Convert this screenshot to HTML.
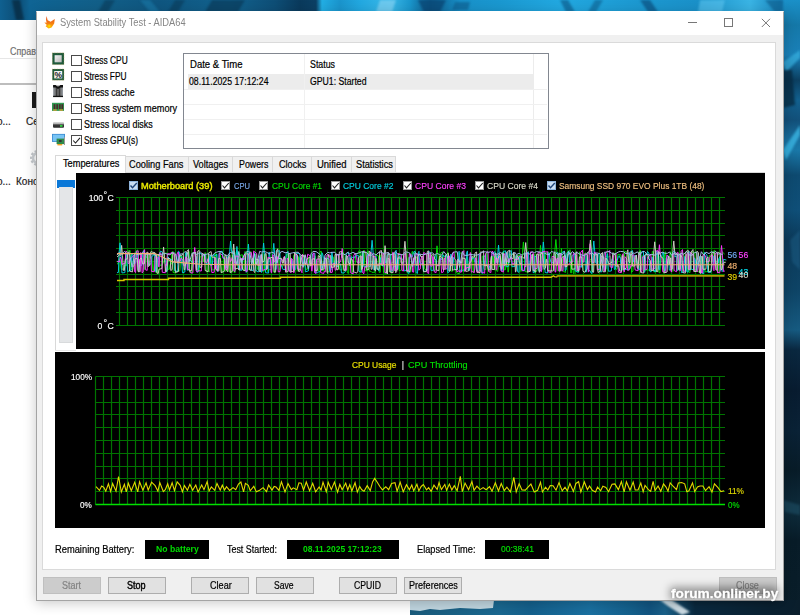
<!DOCTYPE html>
<html><head><meta charset="utf-8">
<style>
*{margin:0;padding:0;box-sizing:border-box}
html,body{width:800px;height:615px;overflow:hidden;background:#0b2c44}
body{position:relative;font-family:"Liberation Sans",sans-serif;font-size:10px;color:#000}
.a{position:absolute}
.t{position:absolute;white-space:nowrap;line-height:10px;font-size:10px;color:#000;-webkit-text-stroke:0.2px currentColor}
.g{position:absolute;white-space:nowrap;line-height:8.7px;font-size:8.7px;-webkit-text-stroke:0.15px currentColor}
.cb{position:absolute;width:10.5px;height:10.5px;border:1px solid #4a4a4a;background:#fff}
.btn{position:absolute;height:16.5px;top:577px;width:58px;background:#e1e1e1;border:1px solid #adadad}
.tab{position:absolute;top:156px;height:16px;background:#f0f0f0;border:1px solid #d9d9d9;border-bottom:none}
.blk{position:absolute;background:#000}
.lc{position:absolute;width:9px;height:9px;background:#fff;border:0.5px solid #999}
</style></head><body>
<!-- desktop background -->
<div class="a" style="left:0;top:0;width:800px;height:615px;background:linear-gradient(90deg,#0f6090 0px,#0c4c74 18px,#0f6494 30px,#125f88 100px,#0f5680 160px,#12628e 230px,#0e4e76 275px,#0a3a5c 300px,#0c4064 316px,#22aee4 322px,#1a94cc 340px,#22a8e0 360px,#3ab8e8 390px,#1a96cc 410px,#0e5a8a 430px,#1890c8 460px,#1a98d0 500px,#22a8e0 560px,#1c98d0 640px,#1a90c8 700px,#3ab4e4 750px,#1a88c0 780px,#1a80b8 800px)"></div>
<div class="a" style="left:783px;top:0;width:17px;height:615px;background:linear-gradient(180deg,#1a90c8 0px,#1578a8 25px,#1a80b8 55px,#0c3f60 80px,#12608e 100px,#12507a 120px,#1a70a0 140px,#1a78a8 150px,#0e4a70 175px,#0f4f78 210px,#0c3a5a 240px,#0e4466 290px,#165a80 330px,#0a2840 350px,#081c30 390px,#0a2236 430px,#081c28 470px,#0e2c3c 510px,#081c28 540px,#0a1e2a 615px)"></div>
<div class="a" style="left:410px;top:600px;width:390px;height:15px;background:linear-gradient(90deg,#1a5a7a 0px,#1a6890 90px,#14608c 120px,#1a70a0 180px,#14608c 220px,#115480 240px,#1a6088 255px,#0a2a40 285px,#0a1e2c 390px)"></div>
<svg class="a" style="left:410px;top:600px" width="90" height="12" viewBox="0 0 90 12"><path d="M0 0H84L83 8L70 9L50 8L30 10L20 9L10 11L0 10Z" fill="#c0d6e0"/></svg>
<svg class="a" style="left:0;top:0" width="800" height="615" viewBox="0 0 800 615">
<g style="filter:blur(1.2px)">
<path d="M12 0L20 0L24 20L16 20Z" fill="#072c44" opacity=".8"/>
<path d="M105 0L115 0L108 12L98 12Z" fill="#0a3a58" opacity=".6"/>
<path d="M140 0L150 0L160 12L150 12Z" fill="#1a7aa8" opacity=".6"/>
<path d="M175 0L185 0L178 12L168 12Z" fill="#0a3a58" opacity=".6"/>
<path d="M212 0L245 0L238 12L205 12Z" fill="#0a3a5a" opacity=".7"/>
<path d="M380 0L396 0L392 12L376 12Z" fill="#78cdf0" opacity=".8"/>
<path d="M418 0L446 0L440 12L424 12Z" fill="#0a4a78" opacity=".8"/>
<path d="M455 2L470 2L468 10L452 10Z" fill="#0e5a8a" opacity=".6"/>
<path d="M560 0L568 0L575 12L566 12Z" fill="#0e5f90" opacity=".7"/>
<path d="M595 0L603 0L596 12L588 12Z" fill="#0e5f90" opacity=".6"/>
<path d="M640 0L650 0L658 12L648 12Z" fill="#0c5080" opacity=".7"/>
<path d="M700 0L725 0L722 12L698 12Z" fill="#5cc4ee" opacity=".6"/>
<path d="M765 0L783 0L783 12L775 12Z" fill="#0e5a88" opacity=".6"/>
<path d="M783 62L800 50L800 58L786 72Z" fill="#38b0e0" opacity=".7"/>
<path d="M783 70L792 70L795 105L783 108Z" fill="#082c44" opacity=".8"/>
<path d="M783 150L800 125L800 135L786 160Z" fill="#40c0ee" opacity=".7"/>
<path d="M790 240L800 230L800 270L792 262Z" fill="#1a5a80" opacity=".6"/>
<path d="M783 500L800 505L800 515L785 512Z" fill="#1e4e64" opacity=".6"/>
<path d="M660 600L672 600L690 612L682 615L668 606Z" fill="#e0ecf2" opacity=".9"/>
</g>
</svg>
<!-- background window -->
<div class="a" style="left:0;top:20px;width:410px;height:595px;background:#fff"></div>
<div class="a" style="left:0;top:58px;width:36px;height:1px;background:#e6e6e6"></div>
<div class="a" style="left:0;top:83px;width:36px;height:1.5px;background:#bdbdbd"></div>
<div class="t" style="top:46.53px;transform:scaleX(0.8941);transform-origin:0 0;left:10px;color:#707070">Справ</div>
<div class="a" style="left:32px;top:92px;width:4px;height:16px;background:#1a1a1a"></div>
<div class="t" style="top:116.53px;left:26px;color:#222">Се</div>
<div class="t" style="top:116.53px;left:-3px;color:#222">о...</div>
<svg class="a" style="left:28px;top:148px" width="8" height="20" viewBox="28 148 8 20"><circle cx="38" cy="158" r="6.5" fill="none" stroke="#c4c8cc" stroke-width="3" stroke-dasharray="2.2 1.6"/><circle cx="38" cy="158" r="5" fill="none" stroke="#cdd1d5" stroke-width="2.5"/></svg>
<div class="t" style="top:176.53px;left:16px;color:#222">Коно</div>
<div class="t" style="top:176.53px;left:-3px;color:#222">о...</div>
<!-- window shadow -->
<div class="a" style="left:36px;top:11px;width:748px;height:589px;box-shadow:0 3px 12px rgba(0,0,0,.22)"></div>
<!-- AIDA window -->
<div class="a" style="left:36px;top:11px;width:748px;height:589.5px;background:#f0f0f0;border:1px solid #a4a4a4;border-top-color:#fff"></div>
<div class="a" style="left:37px;top:12px;width:746px;height:23px;background:#fff"></div>
<!-- flame icon -->
<svg class="a" style="left:43px;top:14px" width="14" height="16" viewBox="43 14 14 16">
<defs><linearGradient id="fl" x1="0" y1="0" x2="0" y2="1"><stop offset="0" stop-color="#e84a12"/><stop offset="0.55" stop-color="#f47a14"/><stop offset="1" stop-color="#ffc000"/></linearGradient>
<radialGradient id="fy" cx="0.5" cy="0.5" r="0.5"><stop offset="0" stop-color="#fff200"/><stop offset="1" stop-color="#ffc000" stop-opacity="0"/></radialGradient></defs>
<path d="M46.6 16L47.6 20.2L50.6 21.8L54.8 19L54.2 23.6L51.6 27.6L48.6 28.6L45.6 26.2L46.8 25L44.4 22.6L46.6 22.8L46 19.8Z" fill="url(#fl)"/>
<ellipse cx="49.2" cy="26" rx="2.6" ry="2.4" fill="url(#fy)"/>
</svg>
<div class="t" style="top:18.34px;transform:scaleX(0.9312);transform-origin:0 0;left:60px;color:#858585;-webkit-text-stroke:0">System Stability Test - AIDA64</div>
<!-- title buttons -->
<div class="a" style="left:688px;top:22px;width:8.5px;height:1px;background:#777"></div>
<div class="a" style="left:724px;top:18px;width:8.5px;height:8.5px;border:1px solid #777"></div>
<svg class="a" style="left:760.5px;top:17.5px" width="10" height="10" viewBox="0 0 10 10"><path d="M0.8 0.8L9 9M9 0.8L0.8 9" stroke="#777" stroke-width="1"/></svg>

<!-- inner white panel -->
<div class="a" style="left:42px;top:42px;width:734px;height:528px;background:#fff;border:1px solid #dadada"></div>

<!-- icons -->
<svg class="a" style="left:52px;top:52px" width="15" height="95" viewBox="0 0 15 95">
 <defs>
  <linearGradient id="cpuin" x1="0" y1="0" x2="1" y2="1"><stop offset="0" stop-color="#f4f4f4"/><stop offset="1" stop-color="#b8b8b8"/></linearGradient>
  <linearGradient id="cach" x1="0" y1="0" x2="1" y2="0"><stop offset="0" stop-color="#9aa0a6"/><stop offset="0.3" stop-color="#606060"/><stop offset="0.7" stop-color="#606060"/><stop offset="1" stop-color="#9aa0a6"/></linearGradient>
  <linearGradient id="dsk" x1="0" y1="0" x2="0" y2="1"><stop offset="0" stop-color="#e0e0e0"/><stop offset="0.4" stop-color="#a0a0a0"/><stop offset="0.45" stop-color="#3a3a3a"/><stop offset="1" stop-color="#2a2a2a"/></linearGradient>
 </defs>
 <rect x="0.3" y="0.9" width="11.7" height="11.7" fill="#1f5a3c"/>
 <rect x="0.3" y="0.9" width="11.7" height="11.7" fill="none" stroke="#c9a85a" stroke-width="0.5" stroke-dasharray="0.8 0.8"/>
 <rect x="2.6" y="3.2" width="7.1" height="7.1" fill="url(#cpuin)"/>
 <rect x="0.3" y="17" width="11.7" height="11.2" fill="#1f5a3c"/>
 <rect x="0.3" y="17" width="11.7" height="11.2" fill="none" stroke="#c9a85a" stroke-width="0.5" stroke-dasharray="0.8 0.8"/>
 <rect x="2.2" y="19" width="8" height="7.4" fill="#f2f2f2"/>
 <text x="6.2" y="26" font-size="8.5" font-family="Liberation Sans" text-anchor="middle" fill="#222" font-weight="bold">%</text>
 <rect x="1.1" y="33.6" width="9.9" height="11.3" fill="url(#cach)"/>
 <path d="M1.1 33.1H3.6L6 35.2L8.5 33.1H11V35.6L8.5 35.6L6 37L3.6 35.6H1.1Z" fill="#111"/>
 <rect x="4" y="36" width="1" height="8.5" fill="#3a3a3a"/><rect x="7" y="36" width="1" height="8.5" fill="#3a3a3a"/>
 <rect x="1.1" y="43.8" width="9.9" height="1.3" fill="#111"/>
 <rect x="0" y="50.8" width="12" height="8.1" fill="#2f9a52"/>
 <rect x="1.6" y="52.2" width="1.8" height="5" fill="#4a2a2a"/><rect x="4.3" y="52.2" width="1.8" height="5" fill="#4a2a2a"/><rect x="6.9" y="52.2" width="1.8" height="5" fill="#4a2a2a"/><rect x="9.4" y="52.2" width="1.8" height="5" fill="#4a2a2a"/>
 <rect x="1.2" y="57.4" width="3.5" height="1.3" fill="#d9a030"/><rect x="7.4" y="57.4" width="3.5" height="1.3" fill="#d9a030"/>
 <rect x="1" y="70" width="11" height="5.8" rx="1" fill="url(#dsk)"/>
 <rect x="8" y="73" width="2.5" height="1.8" fill="#30d040"/>
 <rect x="0" y="81.9" width="13" height="8" fill="#3a8ad0"/>
 <rect x="0.8" y="82.7" width="11.4" height="6.4" fill="#78c4f4"/>
 <rect x="12" y="85" width="1" height="8" fill="#9a9a9a"/>
 <rect x="4.6" y="86.6" width="7.4" height="5.5" fill="#2f8a4a"/>
 <rect x="7" y="88" width="2.6" height="2" fill="#333"/>
 <rect x="5.4" y="92" width="4.8" height="1.4" fill="#f0a020"/>
</svg>
<div class="cb" style="left:71px;top:55px"></div>
<div class="cb" style="left:71px;top:71px"></div>
<div class="cb" style="left:71px;top:87px"></div>
<div class="cb" style="left:71px;top:103px"></div>
<div class="cb" style="left:71px;top:119px"></div>
<div class="cb" style="left:71px;top:135px"></div>
<svg class="a" style="left:72px;top:136px" width="9" height="9" viewBox="0 0 9 9"><path d="M1.2 4.5L3.5 7L8 1.8" fill="none" stroke="#222" stroke-width="1.1"/></svg>
<div class="t" style="top:55.83px;transform:scaleX(0.8366);transform-origin:0 0;left:84.4px">Stress CPU</div>
<div class="t" style="top:71.83px;transform:scaleX(0.8313);transform-origin:0 0;left:84.4px">Stress FPU</div>
<div class="t" style="top:87.83px;transform:scaleX(0.8752);transform-origin:0 0;left:84.4px">Stress cache</div>
<div class="t" style="top:103.83px;transform:scaleX(0.9156);transform-origin:0 0;left:84.4px">Stress system memory</div>
<div class="t" style="top:119.84px;transform:scaleX(0.8893);transform-origin:0 0;left:84.4px">Stress local disks</div>
<div class="t" style="top:135.84px;transform:scaleX(0.8394);transform-origin:0 0;left:84.4px">Stress GPU(s)</div>

<!-- status table -->
<div class="a" style="left:183px;top:53px;width:366px;height:96px;background:#fff;border:1px solid #828790"></div>
<div class="a" style="left:188px;top:74px;width:345px;height:15px;background:#ececec"></div>
<div class="a" style="left:304px;top:54px;width:1px;height:94px;background:#f0f0f0"></div>
<div class="a" style="left:533px;top:54px;width:1px;height:94px;background:#ececec"></div>
<div class="a" style="left:184px;top:89px;width:363px;height:1px;background:#f0f0f0"></div>
<div class="a" style="left:184px;top:104px;width:363px;height:1px;background:#f0f0f0"></div>
<div class="a" style="left:184px;top:119px;width:363px;height:1px;background:#f0f0f0"></div>
<div class="a" style="left:184px;top:134px;width:363px;height:1px;background:#f0f0f0"></div>
<div class="t" style="top:59.53px;transform:scaleX(0.9540);transform-origin:0 0;left:190px">Date &amp; Time</div>
<div class="t" style="top:59.53px;transform:scaleX(0.8815);transform-origin:0 0;left:309.7px">Status</div>
<div class="t" style="top:76.83px;transform:scaleX(0.8735);transform-origin:0 0;left:189px">08.11.2025 17:12:24</div>
<div class="t" style="top:76.83px;transform:scaleX(0.8688);transform-origin:0 0;left:309.7px">GPU1: Started</div>

<!-- tabs -->
<div class="tab" style="left:125px;width:64px"></div>
<div class="tab" style="left:188px;width:45px"></div>
<div class="tab" style="left:232px;width:41px"></div>
<div class="tab" style="left:272px;width:40px"></div>
<div class="tab" style="left:311px;width:41px"></div>
<div class="tab" style="left:351px;width:45px"></div>
<div class="a" style="left:55px;top:171.5px;width:710px;height:1px;background:#d9d9d9"></div>
<div class="a" style="left:55px;top:154.5px;width:71px;height:18.5px;background:#fff;border:1px solid #d9d9d9;border-bottom:none"></div>
<div class="a" style="left:55px;top:172px;width:1px;height:178px;background:#d9d9d9"></div>
<div class="a" style="left:55px;top:349.5px;width:21px;height:1px;background:#e6e6e6"></div>
<div class="t" style="top:158.84px;transform:scaleX(0.9225);transform-origin:0 0;left:62.6px">Temperatures</div>
<div class="t" style="top:160.23px;transform:scaleX(0.9233);transform-origin:0 0;left:129px">Cooling Fans</div>
<div class="t" style="top:160.23px;transform:scaleX(0.9173);transform-origin:0 0;left:193.4px">Voltages</div>
<div class="t" style="top:160.23px;transform:scaleX(0.8813);transform-origin:0 0;left:238.6px">Powers</div>
<div class="t" style="top:160.23px;transform:scaleX(0.9129);transform-origin:0 0;left:278.6px">Clocks</div>
<div class="t" style="top:160.23px;transform:scaleX(0.9441);transform-origin:0 0;left:316.9px">Unified</div>
<div class="t" style="top:160.23px;transform:scaleX(0.9221);transform-origin:0 0;left:356.2px">Statistics</div>
<!-- left progress -->
<div class="a" style="left:57px;top:180px;width:18px;height:7.5px;background:#0a78d8"></div>
<div class="a" style="left:59px;top:187px;width:14px;height:155.5px;background:#e4e6e8;border:1px solid #d8dadc;border-top:none"></div>

<!-- graphs -->
<div class="blk" style="left:76px;top:173px;width:689px;height:176px"></div>
<div class="blk" style="left:55px;top:352px;width:710px;height:175.5px"></div>
<svg class="a" style="left:0;top:0" width="800" height="615" viewBox="0 0 800 615">
<g stroke="#007400" stroke-width="1.2"><line x1="116" y1="197.5" x2="725" y2="197.5"/><line x1="116" y1="210.5" x2="725" y2="210.5"/><line x1="116" y1="223.5" x2="725" y2="223.5"/><line x1="116" y1="235.5" x2="725" y2="235.5"/><line x1="116" y1="248.5" x2="725" y2="248.5"/><line x1="116" y1="261.5" x2="725" y2="261.5"/><line x1="116" y1="274.5" x2="725" y2="274.5"/><line x1="116" y1="286.5" x2="725" y2="286.5"/><line x1="116" y1="299.5" x2="725" y2="299.5"/><line x1="116" y1="312.5" x2="725" y2="312.5"/><line x1="116" y1="325.5" x2="725" y2="325.5"/><line x1="119.5" y1="197.5" x2="119.5" y2="325"/><line x1="127.5" y1="197.5" x2="127.5" y2="325"/><line x1="135.5" y1="197.5" x2="135.5" y2="325"/><line x1="143.5" y1="197.5" x2="143.5" y2="325"/><line x1="151.5" y1="197.5" x2="151.5" y2="325"/><line x1="159.5" y1="197.5" x2="159.5" y2="325"/><line x1="167.5" y1="197.5" x2="167.5" y2="325"/><line x1="175.5" y1="197.5" x2="175.5" y2="325"/><line x1="183.5" y1="197.5" x2="183.5" y2="325"/><line x1="191.5" y1="197.5" x2="191.5" y2="325"/><line x1="199.5" y1="197.5" x2="199.5" y2="325"/><line x1="207.5" y1="197.5" x2="207.5" y2="325"/><line x1="215.5" y1="197.5" x2="215.5" y2="325"/><line x1="223.5" y1="197.5" x2="223.5" y2="325"/><line x1="231.5" y1="197.5" x2="231.5" y2="325"/><line x1="239.5" y1="197.5" x2="239.5" y2="325"/><line x1="247.5" y1="197.5" x2="247.5" y2="325"/><line x1="255.5" y1="197.5" x2="255.5" y2="325"/><line x1="263.5" y1="197.5" x2="263.5" y2="325"/><line x1="271.5" y1="197.5" x2="271.5" y2="325"/><line x1="279.5" y1="197.5" x2="279.5" y2="325"/><line x1="287.5" y1="197.5" x2="287.5" y2="325"/><line x1="295.5" y1="197.5" x2="295.5" y2="325"/><line x1="303.5" y1="197.5" x2="303.5" y2="325"/><line x1="311.5" y1="197.5" x2="311.5" y2="325"/><line x1="319.5" y1="197.5" x2="319.5" y2="325"/><line x1="327.5" y1="197.5" x2="327.5" y2="325"/><line x1="335.5" y1="197.5" x2="335.5" y2="325"/><line x1="343.5" y1="197.5" x2="343.5" y2="325"/><line x1="351.5" y1="197.5" x2="351.5" y2="325"/><line x1="359.5" y1="197.5" x2="359.5" y2="325"/><line x1="367.5" y1="197.5" x2="367.5" y2="325"/><line x1="375.5" y1="197.5" x2="375.5" y2="325"/><line x1="383.5" y1="197.5" x2="383.5" y2="325"/><line x1="391.5" y1="197.5" x2="391.5" y2="325"/><line x1="399.5" y1="197.5" x2="399.5" y2="325"/><line x1="407.5" y1="197.5" x2="407.5" y2="325"/><line x1="415.5" y1="197.5" x2="415.5" y2="325"/><line x1="423.5" y1="197.5" x2="423.5" y2="325"/><line x1="431.5" y1="197.5" x2="431.5" y2="325"/><line x1="439.5" y1="197.5" x2="439.5" y2="325"/><line x1="447.5" y1="197.5" x2="447.5" y2="325"/><line x1="455.5" y1="197.5" x2="455.5" y2="325"/><line x1="463.5" y1="197.5" x2="463.5" y2="325"/><line x1="471.5" y1="197.5" x2="471.5" y2="325"/><line x1="479.5" y1="197.5" x2="479.5" y2="325"/><line x1="487.5" y1="197.5" x2="487.5" y2="325"/><line x1="495.5" y1="197.5" x2="495.5" y2="325"/><line x1="503.5" y1="197.5" x2="503.5" y2="325"/><line x1="511.5" y1="197.5" x2="511.5" y2="325"/><line x1="519.5" y1="197.5" x2="519.5" y2="325"/><line x1="527.5" y1="197.5" x2="527.5" y2="325"/><line x1="535.5" y1="197.5" x2="535.5" y2="325"/><line x1="543.5" y1="197.5" x2="543.5" y2="325"/><line x1="551.5" y1="197.5" x2="551.5" y2="325"/><line x1="559.5" y1="197.5" x2="559.5" y2="325"/><line x1="567.5" y1="197.5" x2="567.5" y2="325"/><line x1="575.5" y1="197.5" x2="575.5" y2="325"/><line x1="583.5" y1="197.5" x2="583.5" y2="325"/><line x1="591.5" y1="197.5" x2="591.5" y2="325"/><line x1="599.5" y1="197.5" x2="599.5" y2="325"/><line x1="607.5" y1="197.5" x2="607.5" y2="325"/><line x1="615.5" y1="197.5" x2="615.5" y2="325"/><line x1="623.5" y1="197.5" x2="623.5" y2="325"/><line x1="631.5" y1="197.5" x2="631.5" y2="325"/><line x1="639.5" y1="197.5" x2="639.5" y2="325"/><line x1="647.5" y1="197.5" x2="647.5" y2="325"/><line x1="655.5" y1="197.5" x2="655.5" y2="325"/><line x1="663.5" y1="197.5" x2="663.5" y2="325"/><line x1="671.5" y1="197.5" x2="671.5" y2="325"/><line x1="679.5" y1="197.5" x2="679.5" y2="325"/><line x1="687.5" y1="197.5" x2="687.5" y2="325"/><line x1="695.5" y1="197.5" x2="695.5" y2="325"/><line x1="703.5" y1="197.5" x2="703.5" y2="325"/><line x1="711.5" y1="197.5" x2="711.5" y2="325"/><line x1="719.5" y1="197.5" x2="719.5" y2="325"/></g>
<g stroke="#007400" stroke-width="1.2"><line x1="95.5" y1="376.5" x2="725" y2="376.5"/><line x1="95.5" y1="389.5" x2="725" y2="389.5"/><line x1="95.5" y1="402.5" x2="725" y2="402.5"/><line x1="95.5" y1="414.5" x2="725" y2="414.5"/><line x1="95.5" y1="427.5" x2="725" y2="427.5"/><line x1="95.5" y1="440.5" x2="725" y2="440.5"/><line x1="95.5" y1="453.5" x2="725" y2="453.5"/><line x1="95.5" y1="466.5" x2="725" y2="466.5"/><line x1="95.5" y1="478.5" x2="725" y2="478.5"/><line x1="95.5" y1="491.5" x2="725" y2="491.5"/><line x1="95.5" y1="504.5" x2="725" y2="504.5"/><line x1="95.5" y1="376.5" x2="95.5" y2="504.5"/><line x1="103.5" y1="376.5" x2="103.5" y2="504.5"/><line x1="111.5" y1="376.5" x2="111.5" y2="504.5"/><line x1="119.5" y1="376.5" x2="119.5" y2="504.5"/><line x1="127.5" y1="376.5" x2="127.5" y2="504.5"/><line x1="135.5" y1="376.5" x2="135.5" y2="504.5"/><line x1="143.5" y1="376.5" x2="143.5" y2="504.5"/><line x1="151.5" y1="376.5" x2="151.5" y2="504.5"/><line x1="159.5" y1="376.5" x2="159.5" y2="504.5"/><line x1="167.5" y1="376.5" x2="167.5" y2="504.5"/><line x1="175.5" y1="376.5" x2="175.5" y2="504.5"/><line x1="183.5" y1="376.5" x2="183.5" y2="504.5"/><line x1="191.5" y1="376.5" x2="191.5" y2="504.5"/><line x1="199.5" y1="376.5" x2="199.5" y2="504.5"/><line x1="207.5" y1="376.5" x2="207.5" y2="504.5"/><line x1="215.5" y1="376.5" x2="215.5" y2="504.5"/><line x1="223.5" y1="376.5" x2="223.5" y2="504.5"/><line x1="231.5" y1="376.5" x2="231.5" y2="504.5"/><line x1="239.5" y1="376.5" x2="239.5" y2="504.5"/><line x1="247.5" y1="376.5" x2="247.5" y2="504.5"/><line x1="255.5" y1="376.5" x2="255.5" y2="504.5"/><line x1="263.5" y1="376.5" x2="263.5" y2="504.5"/><line x1="271.5" y1="376.5" x2="271.5" y2="504.5"/><line x1="279.5" y1="376.5" x2="279.5" y2="504.5"/><line x1="287.5" y1="376.5" x2="287.5" y2="504.5"/><line x1="295.5" y1="376.5" x2="295.5" y2="504.5"/><line x1="303.5" y1="376.5" x2="303.5" y2="504.5"/><line x1="311.5" y1="376.5" x2="311.5" y2="504.5"/><line x1="319.5" y1="376.5" x2="319.5" y2="504.5"/><line x1="327.5" y1="376.5" x2="327.5" y2="504.5"/><line x1="335.5" y1="376.5" x2="335.5" y2="504.5"/><line x1="343.5" y1="376.5" x2="343.5" y2="504.5"/><line x1="351.5" y1="376.5" x2="351.5" y2="504.5"/><line x1="359.5" y1="376.5" x2="359.5" y2="504.5"/><line x1="367.5" y1="376.5" x2="367.5" y2="504.5"/><line x1="375.5" y1="376.5" x2="375.5" y2="504.5"/><line x1="383.5" y1="376.5" x2="383.5" y2="504.5"/><line x1="391.5" y1="376.5" x2="391.5" y2="504.5"/><line x1="399.5" y1="376.5" x2="399.5" y2="504.5"/><line x1="407.5" y1="376.5" x2="407.5" y2="504.5"/><line x1="415.5" y1="376.5" x2="415.5" y2="504.5"/><line x1="423.5" y1="376.5" x2="423.5" y2="504.5"/><line x1="431.5" y1="376.5" x2="431.5" y2="504.5"/><line x1="439.5" y1="376.5" x2="439.5" y2="504.5"/><line x1="447.5" y1="376.5" x2="447.5" y2="504.5"/><line x1="455.5" y1="376.5" x2="455.5" y2="504.5"/><line x1="463.5" y1="376.5" x2="463.5" y2="504.5"/><line x1="471.5" y1="376.5" x2="471.5" y2="504.5"/><line x1="479.5" y1="376.5" x2="479.5" y2="504.5"/><line x1="487.5" y1="376.5" x2="487.5" y2="504.5"/><line x1="495.5" y1="376.5" x2="495.5" y2="504.5"/><line x1="503.5" y1="376.5" x2="503.5" y2="504.5"/><line x1="511.5" y1="376.5" x2="511.5" y2="504.5"/><line x1="519.5" y1="376.5" x2="519.5" y2="504.5"/><line x1="527.5" y1="376.5" x2="527.5" y2="504.5"/><line x1="535.5" y1="376.5" x2="535.5" y2="504.5"/><line x1="543.5" y1="376.5" x2="543.5" y2="504.5"/><line x1="551.5" y1="376.5" x2="551.5" y2="504.5"/><line x1="559.5" y1="376.5" x2="559.5" y2="504.5"/><line x1="567.5" y1="376.5" x2="567.5" y2="504.5"/><line x1="575.5" y1="376.5" x2="575.5" y2="504.5"/><line x1="583.5" y1="376.5" x2="583.5" y2="504.5"/><line x1="591.5" y1="376.5" x2="591.5" y2="504.5"/><line x1="599.5" y1="376.5" x2="599.5" y2="504.5"/><line x1="607.5" y1="376.5" x2="607.5" y2="504.5"/><line x1="615.5" y1="376.5" x2="615.5" y2="504.5"/><line x1="623.5" y1="376.5" x2="623.5" y2="504.5"/><line x1="631.5" y1="376.5" x2="631.5" y2="504.5"/><line x1="639.5" y1="376.5" x2="639.5" y2="504.5"/><line x1="647.5" y1="376.5" x2="647.5" y2="504.5"/><line x1="655.5" y1="376.5" x2="655.5" y2="504.5"/><line x1="663.5" y1="376.5" x2="663.5" y2="504.5"/><line x1="671.5" y1="376.5" x2="671.5" y2="504.5"/><line x1="679.5" y1="376.5" x2="679.5" y2="504.5"/><line x1="687.5" y1="376.5" x2="687.5" y2="504.5"/><line x1="695.5" y1="376.5" x2="695.5" y2="504.5"/><line x1="703.5" y1="376.5" x2="703.5" y2="504.5"/><line x1="711.5" y1="376.5" x2="711.5" y2="504.5"/><line x1="719.5" y1="376.5" x2="719.5" y2="504.5"/></g>
<polyline points="117,263.72 118,263.85 118.89,258.68 120.29,260.97 121.37,269.45 123.77,268.92 124.21,264.94 126.61,265.75 127.09,251.37 130.09,250.36 130.92,269.99 132.72,268.83 133.57,257.8 134.97,257.64 135.39,252.03 137.79,249.86 138.32,271.84 140.12,271.6 140.9,255.8 143.9,256.08 144.37,269.34 144.97,269.31 145.65,254.81 146.65,255.68 147.3,266.77 147.9,266.06 148.82,255.93 149.42,253.79 150.14,258.21 151.94,257.28 152.94,271.63 153.54,270.9 154.52,255.19 155.12,256.01 155.64,272.3 157.44,273.38 157.97,255.3 158.97,257.74 159.9,265.43 162.3,264.83 163.34,262.26 163.94,261.95 164.49,253.12 167.49,253.3 168.06,269.42 169.46,269.25 169.99,264.45 171.39,264.18 171.82,252.97 172.42,251.38 173.13,272.45 174.93,272.85 175.94,270.65 176.54,271.65 177.53,271.6 179.93,270.71 180.69,256.45 182.09,256.48 182.84,265.04 185.24,264.08 186.17,253.48 189.17,251.33 189.81,272.4 192.21,272.25 193.22,252.99 195.62,252.95 196.05,267.2 196.65,268.02 197.4,270.97 199.2,270.84 199.83,257.4 202.83,255.09 203.71,261.72 204.71,262.24 205.12,252.5 205.72,254.24 206.32,271.81 207.32,271.7 208.34,271.2 209.74,271.77 210.52,254.73 211.52,255.97 212.09,269.91 214.49,269.9 214.94,253.81 216.74,254.15 217.51,270.41 219.31,270.77 219.91,252.35 220.51,254.49 221.31,272.9 222.71,271.83 223.52,257.69 224.52,256.48 225.23,271.25 227.03,270.49 227.73,257.47 228.73,256.54 229.53,272.06 230.53,272.16 231.49,272.11 232.09,272.32 232.58,255.16 233.18,257.16 234.15,272.59 235.15,272.58 236.07,252.64 237.07,250.39 237.82,266.85 238.42,267.69 239.32,255.66 242.32,254.65 243.13,270.54 244.13,270.25 244.78,251.68 247.18,252.52 247.88,269.27 248.88,269.87 249.68,251.83 251.08,251.78 252.12,264.8 254.52,264 254.92,254.21 256.72,254.77 257.33,269.16 258.33,270.15 259.05,255.57 260.85,258.02 261.33,270.57 264.33,271.06 265.2,254.71 266.6,256.54 267.29,271.59 268.69,270.53 269.66,269.6 271.46,269.65 271.88,259.1 273.28,258.86 273.83,272.33 275.23,272.94 276.27,255.78 278.67,256.57 279.25,269.49 280.65,269.02 281.29,265.68 283.69,265.96 284.73,256.69 285.73,258.89 286.6,254.49 289,254.91 289.94,263.58 292.94,263.29 293.87,255.08 296.87,255.99 297.3,271.29 297.9,270.52 298.65,256.67 299.65,258.99 300.1,269.92 300.7,270.23 301.17,258.41 303.57,256.51 304.24,265.74 305.24,265.49 306.24,269.79 307.64,269.22 308.71,258.74 310.11,256.36 311.07,262.47 314.07,263.49 314.58,255.77 315.58,256.41 316.55,271.25 318.95,270.49 320.02,251.57 321.42,251.34 322.3,270.71 324.1,270.97 324.79,258.31 326.19,259.28 327.21,271.66 327.81,271 328.81,271.91 330.61,272.19 331.61,256.17 333.41,256.9 333.85,267.08 335.25,266.48 336.33,254.61 338.73,254.56 339.54,269.68 341.94,270.11 343.02,252.57 343.62,252.49 344.4,266.58 345.4,267.13 345.99,256.4 346.59,257.12 347.26,272.79 348.66,273.33 349.12,258.26 351.52,258.14 352.44,272.5 353.04,271.33 353.81,264.42 355.21,263.78 355.69,254.48 358.09,253.18 358.76,251.16 360.16,250.73 360.87,272.38 361.47,271.37 362.31,252.07 364.11,250.11 365.03,270.54 366.43,271.05 367.19,252.91 368.19,250.81 369.27,271.12 371.07,271.34 371.89,272.32 374.89,272.32 375.45,254.89 378.45,255.88 379.22,272.35 380.22,272.39 380.7,255.23 382.5,254.68 383.55,272.59 385.95,273.63 386.83,258.11 388.63,258.47 389.41,271.87 390.81,271.83 391.83,262.33 393.63,262.77 394.15,256.21 395.15,256.17 395.92,264.86 397.32,264.23 397.98,255.15 398.58,253.4 399.1,270.56 401.5,270.19 402.37,263.06 402.97,263.34 403.57,255.11 405.97,252.93 406.46,271.97 407.46,272.3 408.11,258.92 408.71,257.36 409.25,272.39 411.05,271.64 412,251.61 412.6,251.45 413.16,254.02 415.56,252.28 416.09,256.66 417.09,258.69 417.86,263.3 420.26,263.3 420.77,259.18 423.77,260.25 424.77,269.18 427.77,270.37 428.19,257.32 430.59,259.61 431.1,262.36 432.5,262.74 433.56,270.53 435.36,270.46 436.12,256.04 437.02,245.84 437.92,256.04 438.88,264.37 439.88,264.09 440.87,252.9 442.67,251.91 443.77,265.27 446.77,264.63 447.32,253 447.92,252.24 448.88,258.75 449.88,258.63 450.9,270.61 452.3,271.51 453.1,258.68 455.5,260.58 456.27,272.67 459.27,273.77 459.72,253.01 462.12,253.13 462.7,271.11 465.7,270.33 466.58,256.89 467.58,259.36 468.48,269.81 470.28,268.58 471.02,255.39 472.42,256.73 473.12,272.54 473.72,272.76 474.33,254.16 475.33,256.69 476.27,270.03 478.67,271.26 479.62,270.63 481.42,270.74 482.3,256.32 483.3,255.67 484.07,269.21 485.87,269.53 486.34,252.52 487.34,254.64 488.19,270.4 489.19,271.44 489.81,270.42 491.61,269.54 492.67,255.98 493.27,256.23 494.23,269.57 495.23,269.74 496.21,270.52 497.61,271.43 498.4,265.89 501.4,266.24 502.27,252.56 503.67,251.44 504.17,270.01 505.57,269.58 506.09,258.58 507.49,260.6 507.91,272.08 508.51,271.89 509.44,254.07 512.44,254.37 513.09,255.01 513.69,254.24 514.47,264.5 515.87,264.17 516.58,256.18 517.18,258.64 517.93,255.84 519.73,254.95 520.79,271.58 521.79,270.61 522.53,252.16 523.43,241.96 524.33,252.16 525.02,271.54 528.02,272.14 528.63,263.08 531.63,263.7 532.48,254.95 534.28,254.27 534.8,272.91 536.2,271.82 536.83,270.25 537.83,269.68 538.32,255.87 538.92,254.93 539.62,255.59 540.52,245.39 541.42,255.59 542.12,266.09 545.12,266.12 545.87,252.16 547.27,253.95 548.17,251.93 549.17,252.53 550,271.52 551.4,271.38 552.2,258.1 552.8,259.48 553.71,270.32 554.31,270.71 554.97,249.7 555.87,239.5 556.77,249.7 557.32,270.73 559.72,270.47 560.58,258.77 561.48,248.57 562.38,258.77 563.15,271.21 565.55,272.37 566.02,255.52 566.62,254.52 567.17,252.13 570.17,249.76 570.73,272.81 571.33,272.93 571.86,259.14 572.46,260.82 573.25,272.69 573.85,273.79 574.44,269.67 575.44,269.08 576.24,270.95 578.64,272 579.47,251.91 580.47,252.79 581.52,261.29 583.32,261.35 584.28,253.95 585.68,252.78 586.47,263.33 589.47,263.33 590.06,259.31 591.86,259.78 592.36,272.16 592.96,271.26 593.38,253.71 596.38,254.39 597.43,270.38 598.83,269.47 599.91,256.07 601.31,255.35 602.05,266.64 603.85,266.81 604.91,256.69 607.31,256.14 608.38,256.94 610.18,255.95 610.73,265.02 612.53,265.03 613.47,253.95 615.27,253.45 615.83,269.72 617.23,268.6 617.81,254.4 620.81,254.45 621.47,269.88 623.87,269.27 624.8,251.23 627.8,252.86 628.39,269.74 629.39,270.1 630.45,255.02 631.05,254.31 631.53,272.35 632.93,271.09 633.65,256.29 636.05,257.17 636.99,263.67 637.99,262.87 638.71,251.92 640.51,250.28 640.97,269.39 641.57,269.61 642.07,255.54 643.87,257.73 644.56,270.22 647.56,269.87 648.55,270.08 651.55,270.35 652.34,251.39 653.34,251.39 653.77,271.83 656.77,271.56 657.53,254.44 658.53,252.61 658.94,272.53 659.94,272.87 660.73,257.88 662.53,256.26 663.12,263.58 663.72,264.34 664.54,254.27 665.54,251.74 666.18,262.54 669.18,263.43 670.09,251.95 670.69,251.88 671.7,270.37 673.1,271.42 673.55,256.66 676.55,256.49 677.27,270.5 677.87,270.2 678.37,253.54 678.97,253.46 679.93,255.33 680.93,253.14 681.72,252.54 682.32,250.67 683.2,255.37 683.8,254.47 684.63,262.47 685.23,262.38 686.22,254.44 687.22,254.09 688.17,271.54 689.97,272.56 691.01,252 694.01,251.92 694.54,270 695.54,269 696.33,271.19 699.33,271.94 700.04,270.74 700.64,271.46 701.55,257.84 702.95,256.14 703.67,269.8 704.67,269.14 705.55,272.1 708.55,270.93 709.23,255.47 711.63,254.71 712.21,261.63 712.81,261.61 713.36,251.17 714.76,250.21 715.6,262.15 717,260.97 717.52,272.38 718.12,272.61 718.81,258.89 720.21,260.48 720.75,269.63 721.75,268.69 722.19,251.79 724.59,254.11" fill="none" stroke="#00e000" stroke-width="0.95" stroke-opacity="1" stroke-linejoin="miter"/><polyline points="117,272.66 118.4,272.43 119.1,253.01 120,242.81 120.9,253.01 121.93,272.91 124.93,272.58 125.63,254.46 126.63,253.84 127.71,271.9 129.11,270.69 129.91,270.72 130.91,270.85 131.76,253.76 132.76,253.34 133.22,263.97 135.62,263.16 136.25,251.92 137.65,253.36 138.15,269.81 138.75,270.48 139.54,265.18 141.94,265.31 142.36,252.63 144.16,250.21 145.12,255.65 147.52,258.12 148.47,264.65 149.07,265.43 150.13,264.08 151.13,263.7 152.01,255.84 153.01,256.12 153.65,253.64 154.65,252.65 155.63,271.35 156.63,271.87 157.63,258.44 158.23,259.29 159.03,253.86 160.03,252.9 160.51,251.15 162.31,251.97 162.72,257.65 165.72,259.32 166.44,271.92 167.04,271.67 168.13,256.87 169.13,258.98 170.14,259.19 171.94,259.64 172.82,261.7 174.22,262.56 174.65,270.86 177.65,271.49 178.25,251.15 179.25,251.81 180.08,255.67 181.48,256.9 182.48,272.82 184.88,272.03 185.47,252.87 186.47,252.83 187.3,270.32 187.9,270.05 188.33,259.18 191.33,261.02 192.24,262.56 195.24,263.71 195.67,258.23 196.27,256.41 196.81,272.13 198.21,271.91 199.27,253.16 201.67,254.12 202.69,256.19 205.69,254.5 206.12,263.48 209.12,264.34 209.74,255.8 210.34,255.34 211.03,265.74 212.43,264.92 213.11,254.89 214.91,255.26 215.73,255.77 216.73,254.04 217.41,271.37 218.01,271.75 219.07,253.38 222.07,250.91 222.99,258.33 224.79,258.47 225.3,267.51 226.7,267.46 227.24,256.75 228.64,257.11 229.68,251.28 230.58,241.08 231.48,251.28 232.28,252.87 233.28,250.69 234.17,262.35 235.57,263.42 236.02,256.64 236.92,246.44 237.82,256.64 238.6,269.63 241.6,270.4 242.52,258.25 243.12,258.3 244.03,259.34 245.43,258.02 246.23,272.45 246.83,271.69 247.48,254.27 248.38,244.07 249.28,254.27 250,269.8 253,270.54 253.96,252.54 254.96,254.52 255.95,270.98 256.95,270.89 257.77,271.96 258.77,271.71 259.74,255.77 260.74,254.87 261.41,272.42 262.01,272.08 262.7,253.29 263.6,243.09 264.5,253.29 265.6,272.71 268.6,273.04 269.02,251.96 269.62,253.46 270.51,264.9 271.91,264.95 272.87,253.57 273.77,243.37 274.67,253.57 275.52,270 276.12,269.51 276.6,251.35 279.6,250.67 280.64,265.87 282.04,265.76 282.86,269.36 285.26,269.62 286.18,253.31 287.98,251.32 288.93,270.24 290.73,271.38 291.42,258.37 292.02,259.76 293.11,269.87 294.11,269.81 294.69,270.35 295.69,269.12 296.78,252.94 299.78,253.61 300.34,265.23 303.34,265.71 304.29,257.81 304.89,258.91 305.38,271.85 308.38,270.91 309.35,264.02 311.75,264.29 312.56,253.91 314.96,253.2 315.39,272.81 317.19,272.87 318.1,272.1 321.1,271.12 321.96,252.72 322.56,253.7 323.3,257.22 323.9,258.89 324.73,266.31 325.73,266.6 326.13,257.85 329.13,259.25 329.7,271.39 331.1,270.21 331.79,251.88 332.39,254.33 332.91,265 335.31,265.45 336.05,257.48 336.65,255.41 337.05,266.04 337.65,266.96 338.12,264.51 340.52,263.96 341.48,272.95 343.88,272.94 344.71,272.05 345.31,271.78 346.18,253.82 348.58,252.06 349.55,265.8 350.15,264.72 351.13,256.75 354.13,258.16 354.7,256.63 355.3,257.26 355.98,255.09 358.38,255.48 358.86,271.14 361.26,272.22 362.23,252.65 363.23,251.48 363.68,266.57 366.08,266.98 367.08,256.25 368.08,253.99 368.81,266.4 370.61,266.31 371.18,250.49 372.08,240.29 372.98,250.49 373.8,270.06 374.8,269.26 375.51,256.45 376.11,256.16 376.81,269.3 377.81,268.84 378.44,270.41 379.04,270.95 380.05,259.04 380.65,257.59 381.31,265.19 383.71,266.18 384.27,256.59 384.87,254.34 385.37,263.1 386.77,262.06 387.34,254.6 390.34,254.07 390.87,271.47 392.67,270.83 393.28,266.84 395.08,266.36 395.54,252.21 396.14,250.32 396.63,269.51 398.03,269.33 399,256.43 400.8,256.97 401.65,258.37 403.45,260.2 404.1,270.99 407.1,269.81 408,272.9 409,273.47 409.56,256.83 412.56,256.47 413.3,252.29 415.1,251.08 416.1,272.69 417.5,273.38 418.39,252.48 418.99,251.34 419.57,262.68 422.57,263.66 423.41,271.19 425.81,271.11 426.89,269.78 427.89,270.11 428.71,251.38 430.51,252.79 430.92,270.39 433.32,270.31 434.31,256.89 436.11,255.21 436.74,265.33 439.74,265.65 440.46,258.48 441.46,259.68 442.55,255.63 443.15,254.95 443.81,256.43 446.81,255.51 447.74,272.71 449.54,271.59 450.37,255.53 450.97,254.08 451.48,265.6 452.08,264.66 452.82,259.31 453.42,257.29 454.37,269.26 457.37,269.93 458.23,252.27 459.23,251.27 459.95,271.71 460.55,270.45 461.18,269.57 462.58,270.77 463.55,269.99 465.95,269.06 466.45,252.82 467.45,250.91 468.01,270.07 469.41,270.5 470.04,257.53 471.04,255.9 472.06,259.02 473.86,257.87 474.58,261.72 475.58,260.91 476.6,270.78 478,271 478.93,254.69 480.33,256.94 481.35,272.92 482.75,273.39 483.79,257.08 485.59,254.81 486.41,264.89 489.41,265.73 490.01,269.19 491.01,268.31 492.04,253.34 495.04,251.71 496.04,262.43 497.04,263.46 497.63,255.26 498.53,245.06 499.43,255.26 499.96,266.88 500.96,267.31 501.68,271.01 502.28,270.75 503.22,251.52 505.62,250.82 506.08,266.8 508.48,266.42 509.03,251.65 511.43,250.74 511.88,266.78 514.88,266.42 515.3,256.52 516.7,254.94 517.55,271.71 518.95,272.34 519.52,256.49 521.92,258 522.38,270.94 524.78,270.57 525.48,253.62 528.48,251.78 528.94,271.51 529.54,271.39 530.51,254.84 532.31,255.21 533.19,272.74 534.19,272.38 534.77,256.07 536.57,257.16 537.41,263.09 538.01,262.41 538.82,271.16 541.82,269.96 542.44,252.16 543.34,241.96 544.24,252.16 545.15,272.5 547.55,273.01 548.33,252.9 549.33,253.08 549.78,257.67 550.38,260.06 551.45,263.08 554.45,262.05 555.48,253.99 557.88,252.48 558.49,262.86 559.49,262.81 560.24,257.57 560.84,256.39 561.9,252.72 564.3,251.06 565.14,270.74 566.14,269.82 567.12,253.02 568.92,250.91 569.48,262.27 571.28,261.35 572.17,255.45 574.57,253.62 575.3,271.08 578.3,272.34 579.06,266.07 581.46,267.27 581.91,255.64 584.91,255.61 585.53,272.02 586.53,271.87 586.98,255.15 587.58,255.67 588.6,270.78 590,270.63 590.7,272.6 592.1,273.45 592.91,251.18 593.81,240.98 594.71,251.18 595.75,263.27 596.75,263.52 597.37,254.86 598.77,253.2 599.85,271.65 601.65,271.94 602.73,265.47 603.73,265.67 604.57,270.54 605.97,269.45 607.03,253.37 607.63,253.93 608.34,271.26 611.34,270.98 612.07,258.8 613.87,260.56 614.33,269.49 615.33,269.01 616.38,259.32 617.38,260.13 618.24,256.61 619.24,255.61 619.7,257.5 620.3,257.3 621.19,271.15 621.79,271.11 622.34,258.06 624.14,260.31 624.73,270.07 626.13,268.83 627.07,270.04 628.87,269.42 629.47,252.48 632.47,250.63 633.47,262.03 634.07,261.41 635.06,255.21 636.46,256.23 637.55,269.18 639.95,269.42 640.98,252.23 643.38,251.32 644.17,271.83 644.77,272.35 645.86,253.58 646.86,254.97 647.45,251.4 648.85,253.22 649.68,271.19 651.08,272.04 652,257.12 652.6,258.21 653.67,271.05 654.27,270.07 655,272.06 655.6,271.09 656.25,251.49 657.65,251.92 658.67,269.44 659.67,269.68 660.12,255.89 661.92,255.91 662.56,252.41 663.56,252.61 664.5,271.32 665.5,270.55 666.14,257.87 668.54,255.99 669.29,270.16 671.69,269.43 672.45,253 674.25,250.81 675.21,256.88 676.21,255.72 676.68,269.96 678.08,270.27 679.15,255.05 680.95,254.34 681.39,272.63 683.79,272.17 684.74,256.49 686.14,258.34 686.67,271.64 688.07,272.19 689.04,251.35 690.44,253.11 691.19,269.28 693.59,269.66 694.41,257.81 695.41,259.59 696.29,269.97 696.89,270.47 697.6,262.41 699,261.19 699.62,256.44 701.02,256.18 701.42,272.94 703.82,273.66 704.55,252.43 706.95,254.92 707.81,272.19 710.81,272.42 711.91,264.92 713.31,263.93 713.82,256.02 714.82,255.18 715.8,263.96 718.2,262.99 718.89,258.45 719.89,256.63 720.44,270.55 722.84,271.35 723.38,259.28 726.38,260.02" fill="none" stroke="#00d0e0" stroke-width="0.95" stroke-opacity="1" stroke-linejoin="miter"/><polyline points="117,261.26 119.4,262.04 120.27,256.99 121.27,259.47 122,264.33 125,263.16 125.91,251.09 127.31,252.35 128.14,263.49 129.54,263.08 129.97,258.76 131.37,257.92 132.33,257.13 134.13,254.96 134.59,271.74 135.59,272.51 136.41,251.07 138.21,250.91 138.78,270.91 140.18,271.59 140.73,252.45 141.33,254.05 142.13,272.85 143.13,271.9 144.02,251.14 144.62,249.55 145.4,269.77 147.2,270.33 147.86,252.72 150.86,255.18 151.44,271.45 154.44,271.72 155.05,256.7 158.05,257.22 158.46,266.15 159.06,267.1 159.92,252.5 161.72,254.63 162.28,272.28 165.28,272.71 165.9,264.41 166.5,265.49 167.46,253.65 170.46,253.85 171.12,252.44 174.12,254.01 174.63,262.08 176.03,262.76 176.86,254.06 178.26,252.04 179.31,261.37 180.31,261.21 181.04,258.05 182.84,259.71 183.81,265.87 184.81,265.93 185.65,256.91 187.05,258.02 187.47,269.42 189.87,269.76 190.43,272.69 192.83,273.06 193.82,257.67 194.72,247.47 195.62,257.67 196.04,270.91 197.44,272.01 198.3,270.66 201.3,271.02 202.36,255.05 204.76,254 205.27,262.02 207.07,262.57 207.88,258.71 208.48,261.23 209.23,264.2 211.03,264.89 211.86,272.55 214.26,272.23 214.78,257.67 215.78,258.07 216.86,270.84 218.66,270.92 219.32,253.22 222.32,254.93 223.29,258.19 224.69,258.05 225.62,269.51 227.42,269.32 227.94,258.28 229.74,257.48 230.43,261.72 231.03,261.41 232.1,257.53 233.1,259.3 233.9,270.99 234.9,271.56 235.8,255.92 238.8,256.65 239.64,269.84 241.04,268.65 241.59,258.12 243.39,260.17 244.38,254.26 245.38,256.22 245.8,271.38 247.2,271.33 248.22,254.33 251.22,252.35 252.26,259.27 252.86,261.09 253.67,251.11 256.67,253.5 257.24,265.08 259.64,265.4 260.13,256.39 261.53,255.09 262.4,270.45 265.4,269.26 265.91,269.67 266.91,269.11 267.99,257.21 270.39,258.19 271.07,272.48 271.67,272.58 272.76,254.65 273.76,256.33 274.39,262 275.39,261.33 276.41,256.43 277.41,256.73 278.25,271.86 280.05,271.64 281.14,258.9 282.94,260.75 283.47,258.42 284.47,256.15 285.55,271.41 286.55,271.37 287.27,258.18 288.67,260 289.28,271.51 291.08,272.52 291.64,258.44 293.04,260.66 293.65,272.66 294.25,272.32 295.27,254.13 297.07,254.8 297.56,269.24 300.56,269.32 301.42,271.56 302.02,272.75 302.54,254.31 304.34,256.38 305.33,264.65 306.73,263.78 307.63,254.29 310.63,256.01 311.57,270.81 312.17,271.13 313.12,253.36 314.12,253.03 314.54,272.56 315.94,273.43 316.63,259.25 319.63,258.77 320.71,272.63 323.71,273.45 324.25,271.5 325.25,272.03 326.25,256.41 328.05,254.01 328.98,257.2 329.98,256.39 330.51,272.52 332.31,272.24 333.14,263.43 334.54,263.33 335.18,270.19 336.18,269.96 336.64,254.19 338.44,254.88 339.13,262.85 340.53,261.7 341.29,258.65 342.19,248.45 343.09,258.65 344.15,269.39 346.55,270.25 346.98,256.72 349.98,254.83 350.82,272.95 353.22,273.79 353.8,255.42 355.2,253.22 356.09,255.45 356.69,256.79 357.3,262.83 359.7,262.99 360.24,258.43 362.04,256.21 362.83,272.97 363.83,273.68 364.87,266.82 367.27,267.08 367.92,255.61 369.72,255.3 370.31,252.07 372.71,254.05 373.26,256.96 375.06,255.89 376.02,264.51 378.42,265.74 379,263.44 382,264.24 383.1,252.95 384.1,255.25 384.85,272.45 387.25,272.61 388.29,258.05 390.09,259.94 391.01,270.33 391.61,270.34 392.61,252.34 394.01,253.39 394.42,270.53 397.42,269.99 398.2,253.49 401.2,254.47 402.02,270.43 403.42,271.05 404.26,255.27 405.66,253.33 406.6,271.11 408.4,271.05 409.36,253.75 411.76,254.99 412.62,271.99 413.62,272.18 414.53,258.07 415.53,259.78 415.96,253.87 417.76,253.8 418.8,270.17 420.2,269.1 421.1,258.96 421.7,256.57 422.66,264.67 423.26,265.35 423.71,252.39 426.71,254.72 427.24,272.65 428.64,273.46 429.25,254.46 430.25,253.13 430.78,266.21 432.18,265.96 432.69,256.38 433.29,258.1 434.28,271.93 436.08,272.52 436.72,265.55 438.52,265.67 439.32,259.31 440.72,258.09 441.65,272.68 443.45,271.85 444.03,259.11 444.63,257.81 445.29,269.32 447.09,268.54 447.59,256.78 449.39,255.98 450.38,265.76 451.78,265.63 452.84,253.17 453.84,251.72 454.61,259.11 456.01,260.11 456.82,271.75 459.22,270.57 460.1,272.15 461.5,272.04 462.08,252.82 463.88,250.67 464.53,271.33 465.93,270.22 466.5,267.59 469.5,267.33 470.17,252.6 470.77,252.88 471.32,272.09 471.92,272.11 472.58,271.62 474.38,272.59 475.43,257.76 476.03,258.96 476.94,272.52 479.34,271.33 479.87,253.33 480.47,253.09 481.17,271.86 481.77,272.2 482.84,272.49 484.64,273.18 485.62,253.42 488.02,251.52 488.48,271.48 490.88,272.54 491.96,251.34 492.96,251.65 493.94,256.49 495.34,257.86 496.13,269.71 496.73,269.84 497.72,258.32 500.12,255.92 500.98,271 503.38,272.06 503.84,255.31 504.84,253.54 505.89,261.82 507.69,261.37 508.79,258.55 509.79,259.51 510.32,258.13 511.32,257.49 512.3,263.96 514.1,263.73 514.72,259.27 517.72,259.42 518.68,256.76 521.08,255.72 521.68,270.04 524.08,270.58 524.77,265.78 525.77,266.95 526.22,254.5 527.22,252.46 528.31,271.37 530.11,271.5 530.6,251.89 533.6,253.55 534.11,269.19 537.11,268.36 538.16,252.46 539.96,252.07 540.99,271.45 541.59,271.6 542.6,251.56 545,251.44 545.82,252.03 547.62,251.62 548.2,271.92 551.2,272.44 552.12,256.39 554.52,256.85 555.14,272.14 555.74,272.02 556.75,258.6 558.15,258.16 558.71,270.38 559.31,271.44 560.28,254.34 560.88,253.55 561.93,271.19 562.93,270.52 563.57,257.16 564.57,259.01 565.22,267.06 565.82,267.06 566.77,264.77 569.77,263.86 570.44,262.1 572.84,261.77 573.34,253.56 576.34,254.92 576.79,270.66 579.79,269.81 580.69,252.44 582.49,250.23 583.2,262.32 583.8,262.07 584.85,253.65 587.25,254.87 588.27,272.13 588.87,271.2 589.28,253.98 590.18,243.78 591.08,253.98 592.09,262.03 593.89,262.7 594.49,251.8 596.89,254.21 597.34,269.75 600.34,269 600.78,256.44 603.78,257.14 604.24,271.1 604.84,271.08 605.49,252.64 607.89,251.05 608.75,252.11 609.75,250.51 610.2,266.97 612.6,267.4 613.56,255.36 615.96,253.04 616.57,264.89 617.97,265.47 618.41,272.09 621.41,272.58 622.19,255.33 623.19,253.58 623.73,271.34 624.33,272.09 625.04,256.67 626.84,258.96 627.71,270.3 628.31,270.56 628.88,269.45 630.28,268.56 630.75,265.46 631.75,266.33 632.26,255.22 634.06,254.87 635.09,269.89 638.09,270.78 638.53,255.25 639.93,253.77 640.93,271.84 641.93,271.66 642.41,256.99 644.81,256.46 645.26,269.87 647.06,269.21 647.82,256.94 650.82,254.5 651.9,269.29 654.9,268.58 655.7,251.49 657.5,250.27 658.52,254.93 659.42,244.73 660.32,254.93 660.86,257.27 661.86,258.67 662.74,271.77 665.74,272.3 666.84,255.05 669.84,257.43 670.9,270.85 671.5,272.1 672.32,254.97 673.72,253.56 674.17,270.54 676.57,271.74 677.28,252.22 679.08,253.6 679.8,270.99 680.4,270.59 681.11,251.39 682.51,249.59 683.59,271.03 685.39,271.39 686.35,254.82 687.75,253.31 688.3,269.19 689.3,269.18 690.15,252.42 691.15,252.82 692.18,254.86 693.58,254.27 694.59,271.22 697.59,271.47 698.33,265.03 700.73,265.48 701.57,272.9 702.57,272.93 703.14,254.42 705.54,255.81 706.59,262.06 709.59,261.09 710,256.62 712.4,254.7 713.38,269.71 713.98,270.74 714.66,254.5 717.06,252.45 717.49,272.68 719.89,272.38 720.65,255.72 721.55,245.52 722.45,255.72 723.42,271.46 724.82,271.03" fill="none" stroke="#ff30ff" stroke-width="0.95" stroke-opacity="1" stroke-linejoin="miter"/><polyline points="117,257.01 120,254.51 120.73,255.55 121.63,245.35 122.53,255.55 123.34,270.33 124.34,270.49 125.44,259.06 127.24,259.07 127.72,253.2 129.12,251.62 129.53,271.13 132.53,271.92 132.96,266.37 133.96,265.92 134.92,258.75 137.32,258.45 137.99,271.41 138.99,271.76 139.71,259.12 141.51,258 142.6,263.8 144.4,263.75 145.2,253.79 147.6,252.09 148.24,266.55 149.64,265.47 150.16,253.74 151.16,251.4 151.84,252.02 154.84,252.65 155.42,255.7 156.42,254.47 156.86,272.85 158.26,273.49 158.93,269.22 161.93,268.59 162.67,257.17 163.57,246.97 164.47,257.17 165.45,271.35 166.85,271.14 167.85,258.18 170.25,258.78 170.74,270.52 172.14,269.62 172.95,252.61 174.75,254.43 175.42,272.44 178.42,271.5 179.28,256.05 181.68,255.44 182.21,254.78 183.21,253.7 184.22,269.67 184.82,269.93 185.62,263.18 186.62,263.66 187.05,251.13 188.45,249.58 189.19,271.04 191.59,270.44 192.67,253.06 195.67,252.46 196.3,269.18 196.9,270.18 197.35,251.49 199.15,250.44 199.88,267.47 201.68,267.05 202.11,253.34 204.51,254.68 205.18,270.48 208.18,271.66 208.7,252.88 211.1,251.56 211.97,257.16 214.97,257.17 215.58,269.2 217.98,270.45 218.6,258.59 220.4,258.47 221.23,272.57 224.23,271.4 225.13,254.52 226.53,256.65 226.95,271.04 227.95,271.71 228.83,255.47 229.83,254.87 230.42,272.6 232.22,271.39 232.78,254.23 233.68,244.03 234.58,254.23 235,269.19 238,268.06 238.51,269.56 239.51,269.89 240,258.93 241.8,259.42 242.59,269.6 244.99,270.83 245.79,253.88 248.79,253.9 249.56,269.92 251.36,270.33 251.95,259.26 253.35,258.4 253.88,271.63 254.88,272.49 255.69,259.07 258.69,259.79 259.27,270.97 260.27,272.05 261.25,254.31 261.85,253.58 262.26,262.2 264.06,261.42 265.1,253.97 266.1,253.44 266.57,269.4 267.57,268.65 267.98,259.13 270.38,257.86 270.91,257.62 273.31,257.34 274.25,272.06 275.65,271.81 276.3,251.1 277.7,248.78 278.63,258.45 281.63,258.33 282.65,263.4 283.25,263.11 283.98,257.24 284.98,257.86 285.72,272.19 288.12,271.46 288.76,253.28 290.16,253.91 290.83,271.85 293.83,271 294.55,253 297.55,255.41 298.59,271.49 299.99,271.16 300.81,256.23 302.21,254.79 303.17,256.58 304.17,255.32 304.74,263.69 306.14,263.32 306.9,259.07 309.9,256.92 310.67,265.95 311.67,265.12 312.11,259.16 314.51,258.68 315.22,270.55 317.62,270.2 318.28,255.55 320.08,256.96 321.03,269.75 324.03,269.05 325.06,257.97 326.46,258.85 327.09,272.21 327.69,273.46 328.2,254.91 330.6,255.39 331.53,267.51 334.53,266.8 335.09,254.56 336.09,254.45 336.95,269.9 338.35,269.42 339.37,251.95 341.77,251.54 342.3,257.21 342.9,258.42 343.88,270.47 345.28,270.75 346.24,255.3 347.64,257.15 348.54,263.41 350.34,263.55 350.9,258.46 352.7,259.89 353.72,271.82 354.32,272.25 354.85,272.36 356.65,273.08 357.17,272.1 357.77,271.71 358.48,257.76 360.88,255.73 361.41,269.57 362.41,268.69 362.91,251.35 365.91,252.64 367.01,269.99 368.81,269.42 369.23,251.18 370.63,252.55 371.12,269.24 372.12,269.24 373.01,255.77 374.01,256.82 374.5,270.09 375.5,270.95 375.98,258.41 376.58,259.46 377.29,269.34 379.09,269.2 379.68,251.22 381.48,250.58 382.1,265.43 383.5,264.31 384.15,255.86 385.05,245.66 385.95,255.86 386.47,272.82 387.47,274.02 388.09,252.32 389.09,254.01 390.03,272.01 393.03,272.74 393.7,253.29 395.1,254.21 395.72,272.66 396.72,271.47 397.76,257.82 400.76,258.13 401.19,263.07 402.99,263.1 404.03,251.52 404.93,241.32 405.83,251.52 406.92,270.57 409.92,271.69 410.99,265.03 412.79,263.79 413.79,257.79 415.59,256.45 416.15,265 417.15,265.48 417.73,256.29 420.13,254.19 420.98,256.92 422.78,256.12 423.51,271.77 426.51,271.54 427.25,251.65 428.25,250.77 429.33,263.01 430.33,263.61 431.26,255.18 433.66,254.64 434.63,258.82 436.03,260.5 436.43,269.99 438.83,270.66 439.54,256.05 442.54,257.68 443.07,269.57 444.87,269.17 445.45,255.26 448.45,253.25 448.89,270.95 450.29,270.92 450.88,258.48 451.88,256.41 452.4,270.22 453.8,269.78 454.26,269.69 457.26,269.44 457.78,258.99 459.18,260.59 459.99,262.51 461.79,262.81 462.27,257.85 465.27,258.68 465.75,271.45 468.75,270.86 469.34,262.74 471.14,261.69 471.94,256.69 474.34,257.21 475.2,252.7 476.6,251.96 477.04,272.06 480.04,272.66 480.84,251.68 481.84,252.29 482.48,252.37 483.48,250.71 484.36,265.88 487.36,265.46 488.4,269.75 490.2,269.95 490.87,258.18 491.47,255.99 492.01,269.36 494.41,269.62 494.88,254.22 495.88,253.12 496.94,262.41 497.94,263.64 498.79,254.38 500.19,254.04 501.24,269.48 501.84,268.51 502.78,252.73 503.78,254.97 504.87,264.19 506.27,265.14 507.34,251.5 509.74,250.2 510.2,257.17 513.2,258.78 513.63,252.48 514.63,254.2 515.46,271.99 516.06,271.49 517.01,255.4 518.41,257.59 519.49,263.38 520.89,264.1 521.4,256.06 524.4,258.61 524.81,252.77 525.71,242.57 526.61,252.77 527.47,272.21 530.47,271.08 531.46,256.45 532.46,254.13 533.07,270.68 534.07,269.73 535.08,271.96 535.68,271.89 536.53,254.38 538.33,254.12 539.25,272.38 539.85,271.94 540.57,253.66 542.97,253.51 544.06,269.36 545.46,268.14 546.16,259.19 546.76,259.34 547.63,270.56 549.03,270.7 550.12,271.13 551.52,270.33 552.28,271.1 553.28,270.83 553.94,252.98 554.94,252.72 556.04,265.21 557.44,265.03 558.41,253.73 559.81,253.22 560.22,271.27 560.82,270.52 561.81,257.62 564.81,255.46 565.26,266.33 567.06,266.47 567.85,254.26 570.85,253.31 571.89,269.18 574.89,269.02 575.74,254.17 576.74,251.67 577.69,270.23 578.69,271.33 579.5,256.81 581.9,257.14 582.99,271.22 584.79,272.3 585.64,270.57 587.04,269.52 587.86,253.03 588.86,251.22 589.52,250.21 590.42,240.01 591.32,250.21 592.2,271.28 593.6,272.29 594.25,255.54 597.25,253.99 598,272.43 600.4,271.21 601.06,253.99 602.46,252.49 603.01,271.74 605.41,271.78 605.85,258.08 607.65,260.51 608.66,263.69 610.06,263.59 610.92,262.53 611.92,262.66 612.82,252.67 615.22,254.61 615.77,266.15 618.77,265.79 619.6,270.87 621.4,271.3 622.16,256.85 622.76,255.33 623.16,269.35 626.16,268.29 627.24,251.68 627.84,249.79 628.81,261.8 629.81,262.72 630.38,253.31 631.78,251.48 632.52,266.06 634.92,265.89 635.38,257.44 636.38,255.1 637.2,267.37 638.2,268.54 639.04,252.76 640.04,251.73 640.64,272.43 643.64,273.08 644.67,255.01 647.67,254.48 648.55,258.5 650.35,260.49 650.98,270.29 653.38,270.54 653.83,252.03 654.73,241.83 655.63,252.03 656.35,271.45 657.75,271.67 658.73,251.48 659.73,253.01 660.78,256.41 663.18,258.52 664.08,272.91 667.08,272 667.71,258.76 668.71,256.27 669.12,264.49 669.72,263.38 670.18,259.33 670.78,257.9 671.26,270.17 672.26,269.28 672.87,251.16 673.77,240.96 674.67,251.16 675.27,254.7 677.67,253.93 678.5,269.56 679.9,269.13 680.53,254.66 681.93,257 682.97,272.65 685.37,273.07 685.88,251.73 688.28,250.35 688.85,269.89 690.65,269.67 691.17,251.93 692.97,249.5 693.7,271.39 696.1,271.5 697.05,251.19 698.45,252.62 699.51,272.79 700.51,273.6 700.93,257.25 702.33,256.22 702.98,269.27 705.98,269.12 706.58,258.19 707.98,256.86 708.69,271.89 711.09,271.27 711.84,252.53 714.84,253.09 715.8,269.89 716.8,270.2 717.82,252.06 718.42,252.38 719.14,252.99 720.14,253.27 721.05,269.52 722.05,269.51 722.78,263.32 725.78,262.17" fill="none" stroke="#d0d0c4" stroke-width="0.95" stroke-opacity="1" stroke-linejoin="miter"/><polyline points="117,255.13 118.91,252.4 121.66,254.24 124.37,251.45 126.82,253.88 129.53,253.71 132.11,267.14 134.8,253.11 136.57,254.54 139.32,254.69 141.6,254.23 143.45,251.58 145.65,254.66 148.53,254.58 150.85,254.24 153.53,253.77 156.07,255.06 159.02,254.44 161.69,254.26 163.51,253.77 165.89,253.49 167.77,254.57 170.13,254.78 173.2,252.15 175.4,253.75 177.88,263.45 179.86,254.13 182.89,253.81 184.89,251.56 187.34,252.65 189.67,261.36 192.15,253.01 194.52,252.81 196.39,254.69 198.38,253.35 200.39,252.11 203.41,254.65 205.62,254.36 207.92,253.85 210.07,255.28 212.38,255.41 215.1,252.76 217.18,251.98 220.08,251.31 222.37,252.42 224.78,255.17 227.43,255.45 230.41,252.5 232.3,253.11 234.4,253.34 237.01,265.27 238.75,251.46 241.29,262.62 243.97,255.21 246.88,251.35 249.86,252.23 251.67,264.71 254.5,253.84 256.78,264.58 259.63,251.34 261.75,252.07 264.53,251.55 267.1,252.45 269,254.1 271.37,252.28 274.08,253.03 277.08,262.84 279.97,252.74 282.05,251.37 285.13,252.73 287.15,252.48 289.31,253.63 292.4,252.86 295.22,252.32 298.23,252.22 300.86,255.28 303.13,267.33 305.17,254.67 308.26,268.77 311,253.85 313.05,251.42 316.12,251.59 317.94,252.9 320.53,254.91 322.72,268.74 325.05,254.95 327.78,252.34 329.79,252.87 332.87,252.29 334.95,252.29 337.01,255.02 339.61,254.44 342.14,253.29 345.05,254.81 347.16,252.38 349.92,254.03 352.85,252.3 355.83,253.79 358.69,253.06 361.77,251.75 364.11,252.13 366.22,252.08 368.96,255.19 371.24,255.34 373.58,253.5 376.15,254.99 377.99,252.83 380.66,252.19 383.73,253.33 386.24,252.97 388.3,252.56 390.49,255.09 392.54,254.14 395.35,251.5 398.06,254.47 400.53,254.67 403.13,254.75 405.22,251.77 408.16,252.37 410.08,253.38 412.63,266.68 415.09,252.6 417.56,254.68 420.14,254.23 423.22,254.77 425.14,254.35 428.06,253.35 429.81,252.99 432.59,252.95 434.54,254.6 437.62,253.51 440.01,255.05 441.84,255.1 443.77,251.49 446.82,255.41 449.59,261.49 452.68,252.85 454.66,251.97 457.21,251.78 459.55,267.41 462.36,251.5 464.28,255.33 467.35,255.37 469.83,254.55 472.21,254.62 474.28,255.08 476.94,255.16 479.95,253.67 482.75,251.94 485.59,251.82 488.61,252.36 490.5,251.72 492.7,253.27 494.68,254.14 497.6,254.22 500.55,252.4 502.25,253.72 504.19,266.17 506.66,252.31 508.81,263.06 511.56,255.01 514.51,251.96 516.49,254.53 519.19,253.34 522.18,255.25 524.59,253.03 527.27,253.3 529.94,254.15 531.71,251.52 534.51,252.65 536.49,251.62 539.43,252.02 542.49,252.68 544.48,253.11 546.82,254.35 549.24,254.7 551.41,251.47 553.47,252.18 555.41,252.18 558.21,254.95 560.06,253.26 562.54,254.8 564.55,251.48 566.56,262.86 568.48,251.56 570.28,254.6 572.27,251.62 574.65,253.37 577.15,252.57 580.12,254.41 583.07,255.32 585.35,255.16 587.85,252.22 589.63,254.09 591.99,252.9 593.8,254.63 596.67,252.85 598.45,253.3 600.41,253.89 602.36,265.57 604.34,252.19 606.37,252.2 608.92,251.52 611.49,253.14 614.25,254.56 616.22,253.25 618.82,251.77 620.59,251.41 623.34,251.68 625.98,253.71 628.44,253.34 630.81,255.11 632.98,252.95 634.75,253.42 637.45,251.82 639.7,254.75 642.6,251.62 644.4,251.49 647.48,254.51 649.39,254.84 651.9,254.38 654.11,255.21 656.83,253.97 659.76,253.53 662.26,252.17 665.28,253.33 667.4,253.25 669.57,251.98 671.6,255.17 673.31,253.98 675.92,252.72 677.89,255.33 680.96,253.48 683.75,254.18 686.57,251.48 689.47,255.11 691.88,255.38 694.83,252.55 696.59,252.13 698.43,265.23 701.33,251.73 704.12,255.29 705.96,252.12 709.06,253.62 711.24,251.76 713.9,252.44 715.81,251.44 718.21,254.12 720.32,253.58 722.81,254.94" fill="none" stroke="#a0bce8" stroke-width="1" stroke-opacity="1" stroke-linejoin="miter"/><polyline points="117,253.6 155,253.6 173,261.89 200,264.31 230,264.69 724.5,264.69" fill="none" stroke="#f0b070" stroke-width="1.1" stroke-opacity="1" stroke-linejoin="miter"/><polyline points="117,280.5 124,280.5 124,279.5 168.5,279.5 168.5,278.3 280.5,278.3 280.5,277.3 551,277.3 553.5,275.8 555.5,277.3" fill="none" stroke="#d8c800" stroke-width="1.4" stroke-opacity="1" stroke-linejoin="miter"/><polyline points="555.5,277.3 558,275.9 724.5,275.9" fill="none" stroke="#b09a00" stroke-width="1.8" stroke-opacity="1" stroke-linejoin="miter"/>
<line x1="95.5" y1="504.5" x2="725" y2="504.5" stroke="#00e000" stroke-width="1.5"/>
<polyline points="96,486.61 99.46,490.39 101.65,486.01 103.83,487.41 105.79,491.15 108.44,483.78 110.62,491.31 112.61,483.51 116,491.11 118.56,476.52 121.33,492.03 124.4,484.25 126.26,491.92 128.33,483.2 131.3,490.81 134.68,482.29 137.71,491.87 139.57,481.8 142.88,490.28 146.07,482.79 148.19,490.19 151.6,482.17 155.12,485.7 157.91,491.19 159.81,482.58 163.3,491.56 165.3,489.78 167.68,483.68 169.5,489.89 172.13,482.71 174.42,490.67 177.18,481.86 180.2,485.29 182.4,491.7 184.42,485.49 187.41,490.32 189.87,484.34 192.65,490.35 195.77,485.08 198.11,491.96 201.7,485.05 203.98,489.65 207.17,481.57 209.08,490.93 211.37,486.94 214.71,490.31 216.99,483.44 220.23,490.22 222.29,485.19 224.52,490.05 226.5,486.63 229.61,490.38 233.03,487.62 235.76,489.73 238.48,484.07 240.88,482.08 243.55,491.8 245.42,483.3 248.3,485.28 250.21,490.73 253.79,486.35 256.28,491.7 259.62,490.15 263.1,487.65 266.52,491.57 268.59,485.05 271.98,490.15 274.13,486.43 275.99,487.04 278.98,490.34 281.44,481.85 285.01,491.94 288.02,483.63 291.36,489.66 293.23,487.84 296.81,489.74 298.94,482.77 301.23,483.2 303.54,490.14 306.27,481.97 309.62,490.73 312.7,483.4 315.63,491.73 319.13,486.99 321.04,490.13 323.02,482.19 326.28,491.66 328.22,482.32 331.31,489.63 334.44,482.03 337.57,492.05 339.83,484.47 342.15,489.83 345.71,483.18 347.76,489.97 349.78,484.66 351.83,491 355.06,482.7 357.31,492.07 359.69,486.39 361.78,489.75 364.02,491.26 367.21,485.62 370.26,490.62 372.59,481.85 374.68,478.35 377.26,482.27 379.86,486.52 382.41,489.85 385.79,486.74 388.66,489.72 391.57,483.46 394.98,482.6 397.09,491.15 400.18,482.3 403.23,491.7 406.49,484.69 409.44,489.83 411.81,485.05 413.68,490.84 416.92,484.2 418.83,490.89 421.17,486.47 423.33,484.55 426.54,489.82 428.6,487.68 431.15,491.36 433.97,485.2 437.18,489.53 439.02,482.58 441.42,489.59 444.8,484.41 446.63,490.29 449.38,484.15 451.8,489.97 454.29,485.71 457.12,490.68 460.31,476.4 462.31,491.67 465.06,483.07 468.58,489.81 471.93,481.59 474.02,490.32 476.93,486.08 480.03,489.61 483.15,487.65 486.14,489.7 489.53,486.62 492.03,491.11 495.31,482.72 498.49,491.04 501.25,483.58 504.27,490.64 506.89,487.18 510.38,491.94 513.83,477.31 516.23,491.77 519.16,483.76 521.97,489.97 525.33,490.12 527.57,487.53 530.91,484.02 534.24,491.91 537.61,490.25 540.53,482.37 542.43,491.93 545.52,487.15 547.81,490.09 550.2,485.67 553.09,485.81 556.02,490.19 559.01,482.64 562.22,490.86 565.02,487.14 567.32,491.01 569.87,483.47 573.37,491.49 575.91,483.43 578.59,481.71 580.85,491.99 584.35,481.94 587.43,489.72 589.55,486.07 592.32,490.33 595.53,491.91 597.52,487 600.61,490.81 602.86,486.16 605.89,487.43 608.53,491.7 612.05,484.16 614.86,483.91 618.38,489.63 621.39,481.55 624.11,491.84 626.4,481.82 629.99,490.25 633.19,481.98 635.21,490.04 638.02,489.88 640.81,482.98 643.16,491.78 645.04,485.46 648.4,489.62 650.66,491.26 653.13,481.48 655.04,490.63 658.07,486.04 660.79,491.27 663.51,483.92 666.03,487.11 668.01,491.25 670.16,482.82 673.1,486.25 676.49,489.73 678.35,482.88 681.65,482.5 684.69,483.87 686.86,491.79 688.95,490.8 692.53,482.85 694.75,491.52 697.44,486.9 699.91,485.95 702.87,486.07 705.54,490.54 709.06,486.62 711.99,492.06 714.45,483.85 717.98,487.69 720.88,491.54 724.13,490.82" fill="none" stroke="#e0d800" stroke-width="1.1" stroke-opacity="1" stroke-linejoin="miter"/>
</svg>
<!-- legend -->
<div class="lc" style="left:128.5px;top:181px;background:#c9ddf2;border-color:#8fb4dc"></div>
<svg class="a" style="left:128.5px;top:181px" width="9" height="9" viewBox="0 0 9 9"><path d="M1.5 4.5L3.5 6.8L7.8 2" fill="none" stroke="#1f4478" stroke-width="1.35"/></svg>
<div class="g" style="top:182.14px;transform:scaleX(1.0652);transform-origin:0 0;left:141px;color:#e8e800;-webkit-text-stroke:0.4px currentColor">Motherboard (39)</div>
<div class="lc" style="left:221px;top:181px"></div>
<svg class="a" style="left:221px;top:181px" width="9" height="9" viewBox="0 0 9 9"><path d="M1.5 4.5L3.5 6.8L7.8 2" fill="none" stroke="#222" stroke-width="1.1"/></svg>
<div class="g" style="top:182.14px;transform:scaleX(0.8722);transform-origin:0 0;left:233.6px;color:#78a8e8">CPU</div>
<div class="lc" style="left:259px;top:181px"></div>
<svg class="a" style="left:259px;top:181px" width="9" height="9" viewBox="0 0 9 9"><path d="M1.5 4.5L3.5 6.8L7.8 2" fill="none" stroke="#222" stroke-width="1.1"/></svg>
<div class="g" style="top:182.14px;transform:scaleX(0.9676);transform-origin:0 0;left:271.5px;color:#00dd00">CPU Core #1</div>
<div class="lc" style="left:331px;top:181px"></div>
<svg class="a" style="left:331px;top:181px" width="9" height="9" viewBox="0 0 9 9"><path d="M1.5 4.5L3.5 6.8L7.8 2" fill="none" stroke="#222" stroke-width="1.1"/></svg>
<div class="g" style="top:182.14px;transform:scaleX(0.9754);transform-origin:0 0;left:343px;color:#00d0e0">CPU Core #2</div>
<div class="lc" style="left:403px;top:181px"></div>
<svg class="a" style="left:403px;top:181px" width="9" height="9" viewBox="0 0 9 9"><path d="M1.5 4.5L3.5 6.8L7.8 2" fill="none" stroke="#222" stroke-width="1.1"/></svg>
<div class="g" style="top:182.14px;transform:scaleX(0.9870);transform-origin:0 0;left:415px;color:#ff40ff">CPU Core #3</div>
<div class="lc" style="left:475px;top:181px"></div>
<svg class="a" style="left:475px;top:181px" width="9" height="9" viewBox="0 0 9 9"><path d="M1.5 4.5L3.5 6.8L7.8 2" fill="none" stroke="#222" stroke-width="1.1"/></svg>
<div class="g" style="top:182.14px;transform:scaleX(0.9870);transform-origin:0 0;left:487px;color:#d8d8c8">CPU Core #4</div>
<div class="lc" style="left:547px;top:181px;background:#c9ddf2;border-color:#8fb4dc"></div>
<svg class="a" style="left:547px;top:181px" width="9" height="9" viewBox="0 0 9 9"><path d="M1.5 4.5L3.5 6.8L7.8 2" fill="none" stroke="#1f4478" stroke-width="1.35"/></svg>
<div class="g" style="top:182.14px;transform:scaleX(0.9682);transform-origin:0 0;left:559px;color:#f0c080">Samsung SSD 970 EVO Plus 1TB (48)</div>
<!-- axis labels -->
<div class="g" style="top:194.34px;left:88.7px;color:#fff">100</div>
<div class="g" style="top:191.28px;left:103.4px;color:#fff;font-size:9px">°</div>
<div class="g" style="top:194.34px;left:107.4px;color:#fff">C</div>
<div class="g" style="top:322.14px;left:97.5px;color:#fff">0</div>
<div class="g" style="top:319.28px;left:103.4px;color:#fff;font-size:9px">°</div>
<div class="g" style="top:322.14px;left:107.4px;color:#fff">C</div>
<div class="g" style="top:251.14px;left:727.4px;color:#70a8f0">56</div>
<div class="g" style="top:251.14px;left:738.6px;color:#ff40ff">56</div>
<div class="g" style="top:262.14px;left:727.4px;color:#f0b070">48</div>
<div class="g" style="top:268.14px;left:738.6px;color:#00d8e8">43</div>
<div class="g" style="top:271.14px;left:738.6px;color:#d8d8c8">40</div>
<div class="g" style="top:272.94px;left:727.4px;color:#e0d000">39</div>
<div class="g" style="top:361.24px;transform:scaleX(0.9678);transform-origin:0 0;left:351.6px;color:#e8e000">CPU Usage</div>
<div class="g" style="top:361.24px;left:401.8px;color:#e8e8e8">|</div>
<div class="g" style="top:361.24px;transform:scaleX(1.0508);transform-origin:0 0;left:408.4px;color:#00e000">CPU Throttling</div>
<div class="g" style="top:373.44px;transform:scaleX(0.9445);transform-origin:0 0;left:71px;color:#fff">100%</div>
<div class="g" style="top:501.14px;transform:scaleX(0.9393);transform-origin:0 0;left:80px;color:#fff">0%</div>
<div class="g" style="top:487.14px;transform:scaleX(0.9552);transform-origin:0 0;left:728px;color:#e0d800">11%</div>
<div class="g" style="top:500.84px;transform:scaleX(0.9154);transform-origin:0 0;left:727.5px;color:#00e000">0%</div>

<!-- bottom info -->
<div class="t" style="top:545.03px;transform:scaleX(0.9324);transform-origin:0 0;left:55.3px">Remaining Battery:</div>
<div class="blk" style="left:145px;top:540px;width:64px;height:19px"></div>
<div class="t" style="top:544.48px;transform:scaleX(0.9615);transform-origin:0 0;left:155.5px;color:#00dd00;font-size:9px;font-weight:bold;-webkit-text-stroke:0">No battery</div>
<div class="t" style="top:545.03px;transform:scaleX(0.8906);transform-origin:0 0;left:226.8px">Test Started:</div>
<div class="blk" style="left:287px;top:540px;width:112px;height:19px"></div>
<div class="t" style="top:544.48px;transform:scaleX(0.9473);transform-origin:0 0;left:303px;color:#00dd00;font-size:9px;font-weight:bold;-webkit-text-stroke:0">08.11.2025 17:12:23</div>
<div class="t" style="top:545.03px;transform:scaleX(0.9231);transform-origin:0 0;left:417.2px">Elapsed Time:</div>
<div class="blk" style="left:485px;top:540px;width:64px;height:19px"></div>
<div class="t" style="top:544.48px;transform:scaleX(0.9416);transform-origin:0 0;left:500.5px;color:#00dd00;font-size:9px;-webkit-text-stroke:0.2px currentColor">00:38:41</div>

<!-- buttons -->
<div class="btn" style="left:43px;background:#cccccc;border-color:#bfbfbf"></div>
<div class="btn" style="left:108px"></div>
<div class="btn" style="left:191px"></div>
<div class="btn" style="left:256px"></div>
<div class="btn" style="left:339.4px"></div>
<div class="btn" style="left:404px"></div>
<div class="btn" style="left:718.5px;background:#cccccc;border-color:#bfbfbf"></div>
<div class="t" style="top:581.03px;transform:scaleX(0.8994);transform-origin:0 0;left:62.4px;color:#838383">Start</div>
<div class="t" style="top:581.03px;transform:scaleX(0.9039);transform-origin:0 0;left:127.4px;-webkit-text-stroke:0.4px #000">Stop</div>
<div class="t" style="top:581.03px;transform:scaleX(0.9119);transform-origin:0 0;left:209.6px">Clear</div>
<div class="t" style="top:581.03px;transform:scaleX(0.8598);transform-origin:0 0;left:274.4px">Save</div>
<div class="t" style="top:581.03px;transform:scaleX(0.8675);transform-origin:0 0;left:354.4px">CPUID</div>
<div class="t" style="top:581.03px;transform:scaleX(0.9050);transform-origin:0 0;left:408.6px">Preferences</div>
<div class="t" style="top:581.03px;transform:scaleX(0.8914);transform-origin:0 0;left:736.4px;color:#838383">Close</div>
<!-- watermark -->
<div class="a" style="left:670px;top:587px;width:108px;height:13px;background:rgba(0,0,0,.38);filter:blur(4px)"></div>
<div class="a" style="top:586.50px;transform:scaleX(1.0006);transform-origin:0 0;left:671.4px;white-space:nowrap;font-size:13.7px;line-height:13.7px;font-weight:bold;color:#fff;-webkit-text-stroke:0.3px #fff;text-shadow:0 0 2px rgba(0,0,0,.35)">forum.onliner.by</div>
</body></html>
